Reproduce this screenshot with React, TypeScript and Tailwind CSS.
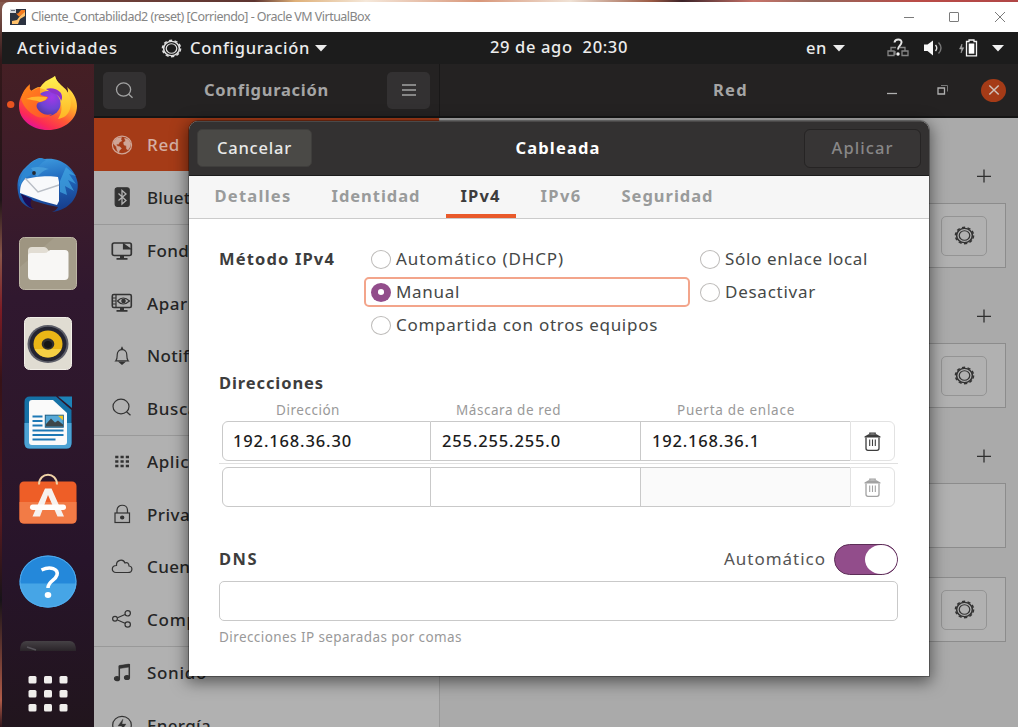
import React, { useLayoutEffect, useRef, useState } from "react";

/* Text tracked at run time so that it fills the width its slot asks for. */
function Fit({ w, className = "", children }: { w: number; className?: string; children: string }) {
  const ref = useRef<HTMLSpanElement>(null);
  const [spacing, setSpacing] = useState(0);
  useLayoutEffect(() => {
    const el = ref.current;
    if (!el) return;
    const prev = el.style.letterSpacing;
    el.style.letterSpacing = "0px";
    const natural = el.getBoundingClientRect().width;
    el.style.letterSpacing = prev;
    setSpacing((w - natural) / children.length);
  }, [w, children]);
  return (
    <span ref={ref} className={"inline-block shrink-0 whitespace-pre " + className} style={{ letterSpacing: spacing + "px" }}>
      {children}
    </span>
  );
}

function Gear({ className = "" }: { className?: string }) {
  return (
    <svg viewBox="0 0 20 20" preserveAspectRatio="none" fill="none" stroke="currentColor" className={"h-[19px] w-[21px] " + className}>
      <circle cx="10" cy="10" r="8.600" strokeWidth="1.500" strokeDasharray="3.100 2.304" />
      <circle cx="10" cy="10" r="7.500" strokeWidth="1.500" />
      <circle cx="10" cy="10" r="5" strokeWidth="1.200" />
    </svg>
  );
}

function SearchIcon() {
  return (
    <svg viewBox="0 0 20 18" fill="none" stroke="currentColor" strokeWidth="1.400" className="h-[17px] w-[19px]">
      <ellipse cx="9" cy="8" rx="7.500" ry="7" />
      <path d="M14.500 13l4 3.600" />
    </svg>
  );
}

function Caret({ className = "" }: { className?: string }) {
  return (
    <svg viewBox="0 0 12 7" fill="currentColor" className={"h-[7px] w-3 " + className}>
      <path d="M0 0h12L6 6.500z" />
    </svg>
  );
}

function Trash({ className }: { className: string }) {
  return (
    <svg viewBox="0 0 17 19" fill="none" stroke="currentColor" strokeWidth="1.200" className={"h-[19px] w-[17px] " + className}>
      <path d="M5.800 2.600V1.100h5.400v1.500" />
      <path d="M4.500 2.200h8l4 2.200v1H.5v-1z" fill="currentColor" stroke="none" />
      <path d="M2 5.500v10.800q0 2 2 2h9q2 0 2-2V5.500" strokeWidth="1.300" />
      <path d="M5.700 7.500v6.500M8.500 7.500v6.500M11.300 7.500v6.500" strokeWidth="1.100" />
    </svg>
  );
}

/* ---------- dock ---------- */

const dockSvg = "block h-[79.5px] w-[92px] shrink-0";

function Firefox() {
  return (
    <svg viewBox="0 0 92 79.5" className={dockSvg}>
      <defs>
        <linearGradient id="ffA" x1=".85" y1=".1" x2=".3" y2="1">
          <stop offset="0" stopColor="#fff04c" />
          <stop offset=".35" stopColor="#ffb02a" />
          <stop offset=".62" stopColor="#ff5a34" />
          <stop offset=".85" stopColor="#fb2a56" />
          <stop offset="1" stopColor="#e3129b" />
        </linearGradient>
        <radialGradient id="ffB" cx=".65" cy=".25" r=".85">
          <stop offset="0" stopColor="#a238e8" />
          <stop offset=".55" stopColor="#6d44d4" />
          <stop offset="1" stopColor="#4a3494" />
        </radialGradient>
        <linearGradient id="ffC" x1="0" y1="0" x2="1" y2="1">
          <stop offset="0" stopColor="#ff8a16" />
          <stop offset="1" stopColor="#ff4e30" />
        </linearGradient>
        <linearGradient id="ffD" x1="0" y1="0" x2="0" y2="1">
          <stop offset="0" stopColor="#fff352" />
          <stop offset="1" stopColor="#ffb424" />
        </linearGradient>
      </defs>
      <ellipse cx="8.700" cy="40.500" rx="3.700" ry="3.500" fill="#e95420" />
      <path d="M28 21c-1 3-1 5 0 7 3-3 7-5 10-5 7-2 12-6 15-11 1 5 5 8 9 12 2 1 3 3 4 5 0-2 0-4-1-6 6 5 10 12 10 19 0 14-13 24-29 24S17 56 17 42c0-8 4-14 11-21z" fill="url(#ffA)" />
      <path d="M38 24c5-9 10-8 15-12 1 5 5 8 9 12 6 6 8 13 6 21-2 6-6 9-12 10 8-12 3-25-18-31z" fill="url(#ffD)" />
      <ellipse cx="46" cy="39.500" rx="12.500" ry="12.500" fill="url(#ffB)" />
      <path d="M50 29c5 1 8 4 9 8 2-3 1-7-1-9-3-3-9-5-14-3z" fill="#8d31cc" />
      <path d="M28 20c-1 4 0 6 2 7l8-4v6c0 2 3 3 8 4 0 2-3 4-7 5-4 0-5 3-4 6 3 5 8 8 15 6-4 4-12 5-18 1-9-5-12-13-13-16 1-6 4-11 9-15z" fill="url(#ffC)" />
      <path d="M24 35c6-3 12-3 21-2 0 3-4 4-7 5-5-2-9-2-14-3z" fill="#ffb52e" />
    </svg>
  );
}

function Thunderbird() {
  return (
    <svg viewBox="0 0 92 79.500" className={dockSvg}>
      <defs>
        <linearGradient id="tbA" x1=".3" y1="0" x2=".5" y2="1">
          <stop offset="0" stopColor="#3f9de0" />
          <stop offset=".45" stopColor="#2068bd" />
          <stop offset="1" stopColor="#173d8c" />
        </linearGradient>
      </defs>
      <path d="M17 53c-3-12-2-22 7-30 3-3 8-8 14-9l5 1c16-2 30 9 32.500 23 2 15-8 28-25.500 30 3-1 5-3 6-5l-10-2-14-4-13-7c3 6 6 11 13 15-8-2-13-6-15-12z" fill="url(#tbA)" />
      <path d="M19 50c3 9 6 12 12 15-3-4-3-7-1-10z" fill="#1b0d55" />
      <path d="M23 35l11-2c7-1 17-1 22 0l1 5v19l-2 4-15-4-22-8c0-6 1-10 5-14z" fill="#f8f9fb" />
      <path d="M23 34l13 14 21-7" fill="none" stroke="#b9bec6" strokeWidth="1.400" />
      <path d="M17 43c1-13 10-26 22-29l5 2c-9 5-10 14-21 18-3 3-4 6-6 9z" fill="#2e87d2" />
      <path d="M29 24c7-2 12-1 18 1-6 1-9 5-12 8z" fill="#5cb3e6" opacity=".5" />
      <path d="M64 23l10 9-7-2 7 10-8-4 6 11-9-5 2 9-7-3V37z" fill="#41a7e2" opacity=".7" />
      <circle cx="32" cy="29" r="1.900" fill="#222a33" />
    </svg>
  );
}

function Files() {
  return (
    <svg viewBox="0 0 92 79.500" className={dockSvg}>
      <rect x="17.500" y="14.500" width="57" height="52" rx="5" fill="#a59d8a" stroke="#bdb6a5" />
      <path d="M18 44L52 15H23q-5 0-5 5z" fill="#91886f" opacity=".35" />
      <path d="M26 28q0-4 4-4h12q2 0 3 1.500l2 2.500h15q4 0 4 4v5H26z" fill="#e2ddd3" />
      <path d="M26 33q0-3 3-3h13q3 0 4-1.500l2-1.500h15q3.500 0 3.500 3.500V53q0 4-4 4H30q-4 0-4-4z" fill="#f8f7f5" />
    </svg>
  );
}

function Rhythmbox() {
  return (
    <svg viewBox="0 0 92 79.500" className={dockSvg}>
      <rect x="22.500" y="14.500" width="47" height="52" rx="5" fill="#e0dcd2" stroke="#f2efe8" />
      <ellipse cx="46" cy="41" rx="20.500" ry="19" fill="#5d5e68" />
      <ellipse cx="46" cy="41" rx="18.500" ry="17.200" fill="#242431" />
      <ellipse cx="46" cy="41" rx="14.500" ry="13.500" fill="#eab616" />
      <path d="M32.500 46a14.500 13.500 0 0027 0z" fill="#f6d650" opacity=".8" />
      <ellipse cx="46" cy="41" rx="6.300" ry="5.800" fill="#2d2d2f" />
      <ellipse cx="46" cy="41.500" rx="4" ry="3.500" fill="#151515" />
    </svg>
  );
}

function Writer() {
  return (
    <svg viewBox="0 0 92 79.500" className={dockSvg}>
      <path d="M28 14.500h26L69.500 28v33q0 5.500-5 5.500h-37q-5 0-5-5.500V20q0-5.500 5.500-5.500z" fill="#1571a6" />
      <path d="M22.500 41h47v20q0 5.500-5 5.500h-37q-5 0-5-5.500z" fill="#4da3d4" />
      <path d="M56 14.500h14V26z" fill="#1d83b8" />
      <path d="M30 18h21l14 13v29q0 3-3 3H30q-3 0-3-3V21q0-3 3-3z" fill="#fafafa" />
      <path d="M30.500 34.500h10M30.500 39h10M30.500 43.500h10M30.500 48.500h31M30.500 53h31M30.500 57.500h23" stroke="#1d78b5" strokeWidth="2.200" />
      <rect x="43.300" y="33.200" width="18" height="12" fill="#56a9d8" stroke="#1b5d85" />
      <path d="M56 33.700h5v4.500z" fill="#f3c21c" />
      <path d="M44 44.500V42l5-5.500 4 4 3-2 5 4v2z" fill="#3d4649" />
    </svg>
  );
}

function Software() {
  return (
    <svg viewBox="0 0 92 79.500" className={dockSvg}>
      <rect x="17.500" y="19.500" width="57" height="42" rx="4.500" fill="#ee5e27" />
      <path d="M17.500 40h57v17q0 4.500-4.500 4.500H22q-4.500 0-4.500-4.500z" fill="#f27b46" />
      <path d="M37 22.500c0-13 18-13 18 0" fill="none" stroke="#f0d2a6" strokeWidth="2" />
      <path d="M43 26.500h6.500L62 54.500h-6.500L46 33l-8 21.500h-7.500z" fill="#f6f1ee" />
      <rect x="28" y="42.500" width="36" height="5.500" rx="2.700" fill="#fffdfb" />
    </svg>
  );
}

function HelpApp() {
  return (
    <svg viewBox="0 0 92 79.500" className={dockSvg}>
      <ellipse cx="46" cy="40.500" rx="28.500" ry="26" fill="#2488da" />
      <path d="M17.500 42.500h57c-1 13-12 24-28.500 24s-27.500-11-28.500-24z" fill="#46a5e6" />
      <ellipse cx="46" cy="40.500" rx="28" ry="25.500" fill="none" stroke="#54acec" />
      <path d="M39.500 29c9-4.500 17-1 15.500 5-1.500 5.500-9 6-9 13" fill="none" stroke="#fff" strokeWidth="3.500" />
      <ellipse cx="46" cy="54" rx="3.300" ry="3" fill="#fff" />
    </svg>
  );
}

/* ---------- settings sidebar ---------- */

const sideIcons: Record<string, React.ReactNode> = {
  Red: (
    <>
      <ellipse cx="11" cy="10" rx="9.600" ry="8.800" />
      <path d="M2.500 6.500L6 3l4.500-.8L10 4.500l1 1.200-2.500 1.500-1 2-2-.3L6 11l3 .8 1.500 1.700-2 2-1 2.500-1.500-3-.8-3.500L2.500 9zM13.500 3l4 1.500L20 8.500l-1 3.500-2 3-1.500-1-.3-3.200L13 10l-.5-2.500 2-1.500z" fill="currentColor" strokeWidth=".4" />
    </>
  ),
  Bluetooth: (
    <>
      <rect x="4.200" y=".8" width="14" height="18.500" rx="2" fill="currentColor" />
      <path d="M7.500 6.500l7.500 7-4 3.500V3.500l4 3.500-7.500 6.500" stroke="#b1b1b1" strokeWidth="1.300" />
    </>
  ),
  Fondo: (
    <>
      <rect x="1.300" y="2" width="19" height="12.500" rx="1.800" strokeWidth="1.700" />
      <path d="M12.500 3v5h7z" fill="currentColor" />
      <path d="M9 15h4v2h3.500v1.800h-11V17H9z" fill="currentColor" strokeWidth="0" />
    </>
  ),
  Apariencia: (
    <>
      <rect x="1.300" y="1.500" width="19" height="13" rx="1.500" strokeWidth="1.600" />
      <path d="M5 2v12M1.500 5h3M1.500 8h3M1.500 11h3" />
      <path d="M6.500 8q5.500-6 12 0-6.500 6-12 0z" />
      <circle cx="12.500" cy="8" r="1.700" fill="currentColor" />
      <path d="M9 15h4v2h3.500v1.800h-11V17H9z" fill="currentColor" strokeWidth="0" />
    </>
  ),
  Notificaciones: (
    <>
      <path d="M4.800 14.800c1.500-1.500 1.400-3 1.400-6 0-7 9.600-7 9.600 0 0 3-.1 4.500 1.400 6zM10.200 3l.8-1.500.8 1.500" />
      <path d="M8.500 16h5l-2.500 2.200z" fill="currentColor" />
    </>
  ),
  Buscar: (
    <>
      <ellipse cx="10" cy="8.500" rx="8" ry="7.300" />
      <path d="M15.500 13.800l4 3.500" />
    </>
  ),
  Aplicaciones: (
    <path d="M4.200 5h3.200M9.500 5h3.200M14.800 5H18M4.200 9.500h3.200M9.500 9.500h3.200M14.800 9.500H18M4.200 14h3.200M9.500 14h3.200M14.800 14H18" strokeWidth="2.600" />
  ),
  Privacidad: (
    <>
      <rect x="4" y="9" width="14.500" height="9.500" />
      <path d="M6 9V6.500c0-7 10.500-7 10.500 0V9" />
      <ellipse cx="11.200" cy="13.500" rx="1.600" ry="1.400" fill="currentColor" />
    </>
  ),
  Cuentas: <path d="M5 15.500h12c5 0 5-6 1-6.500 0-3-2-4-4-3C12 1 5 3 5.500 8.500 0 8.500 0 15.500 5 15.500z" />,
  Compartir: (
    <>
      <circle cx="4" cy="9.800" r="2.400" />
      <circle cx="16.700" cy="4.300" r="2.700" />
      <circle cx="16.700" cy="15.500" r="2.700" />
      <path d="M6.500 8.800L14 5.500M6.500 11l7.500 3.300" />
    </>
  ),
  Sonido: (
    <>
      <path d="M8.300 15.500V3.300l10-1.500V14" strokeWidth="1.500" />
      <path d="M8.300 2.500l10-1.500v3L8.300 5.500z" fill="currentColor" strokeWidth=".5" />
      <ellipse cx="6" cy="15.700" rx="2.500" ry="2" fill="currentColor" />
      <ellipse cx="16" cy="14.500" rx="2.500" ry="2" fill="currentColor" />
    </>
  ),
  Energía: (
    <>
      <ellipse cx="11" cy="10" rx="9.300" ry="8.700" />
      <path d="M12 4l-5 7h4l-1.500 6 5.500-8h-4z" fill="currentColor" strokeWidth=".3" />
    </>
  ),
};

function SideRow({ name, w, active = false }: { name: string; w: number; active?: boolean }) {
  return (
    <div className={active ? "flex h-[53px] shrink-0 items-center bg-[#a53b17] pl-[17px] text-[#d5b0a4]" : "flex h-[52.500px] shrink-0 items-center pl-[17px] text-[#252525]"}>
      <svg viewBox="0 0 22 20" fill="none" stroke="currentColor" strokeWidth="1.200" className={active ? "mr-[14px] h-5 w-[22px] shrink-0 text-[#cfa596]" : "mr-[14px] h-5 w-[22px] shrink-0 text-[#333]"}>
        {sideIcons[name]}
      </svg>
      <Fit w={w} className="text-[17px] font-medium">{name}</Fit>
    </div>
  );
}

const Rule = () => <div className="h-px shrink-0 bg-[#999]" />;

function PlusRow({ first = false }: { first?: boolean }) {
  return (
    <div className={first ? "flex h-[85px] justify-end pr-[14px] pt-[51px]" : "flex h-[75px] justify-end pr-[14px] pt-[41px]"}>
      <svg viewBox="0 0 16 14" className="h-[14px] w-4" stroke="#2f2f2f" strokeWidth="1.300">
        <path d="M1 7.300h14M8 .5v13" />
      </svg>
    </div>
  );
}

function Card({ gear = true }: { gear?: boolean }) {
  return (
    <div className="flex h-[65px] items-center justify-end border border-[#8c8c8c] bg-[#b1b1b1] pr-[18px]">
      {gear && (
        <div className="flex h-10 w-[46px] items-center justify-center rounded-[5px] border border-[#949494] text-[#333]">
          <Gear />
        </div>
      )}
    </div>
  );
}

/* ---------- dialog ---------- */

function Radio({ label, w, on = false }: { label: string; w: number; on?: boolean }) {
  return (
    <div className={on ? "flex h-[30px] w-[326px] items-center rounded-[5px] border-2 border-[#f3a58b] pl-[5px]" : "flex h-[30px] items-center pl-[7px]"}>
      <span className={on ? "mr-[5px] flex h-[19px] w-5 shrink-0 items-center justify-center rounded-[50%] bg-[#924d8b]" : "mr-[5px] h-[19px] w-5 shrink-0 rounded-[50%] border border-[#bdbbb9] bg-white"}>
        {on && <span className="h-[6px] w-[6.500px] rounded-[50%] bg-white" />}
      </span>
      <Fit w={w} className="pb-px text-[17px] leading-6 text-[#454847]">{label}</Fit>
    </div>
  );
}

function Tab({ label, w, active = false }: { label: string; w: number; active?: boolean }) {
  return (
    <div className={active ? "flex items-center border-b-[4px] border-[#e95a2b] px-[15px] pt-[2px] text-[#3d3d3d]" : "flex items-center border-b-[4px] border-transparent px-[15px] pt-[2px] text-[#999b9b]"}>
      <Fit w={w} className="text-[16.500px] font-bold leading-6">{label}</Fit>
    </div>
  );
}

function AddressRow({ values, off = false }: { values: string[]; off?: boolean }) {
  const widths = [119, 119, 108];
  const text = "pb-px text-[16.500px] font-medium leading-6";
  return (
    <div className="ml-[3px] mr-[2px] flex h-10 text-[#1c1c1c]">
      <div className="flex w-[209px] items-center rounded-l-[6px] border border-[#c9c9c9] pl-[10px]">
        {values[0] && <Fit w={widths[0]} className={text}>{values[0]}</Fit>}
      </div>
      <div className="flex w-[209px] items-center border-y border-[#c9c9c9] pl-[11px]">
        {values[1] && <Fit w={widths[1]} className={text}>{values[1]}</Fit>}
      </div>
      <div className={off ? "w-[210px] border-y border-l border-[#c9c9c9] bg-[#fafafa]" : "flex w-[210px] items-center border-y border-l border-[#c9c9c9] pl-[11px]"}>
        {values[2] && <Fit w={widths[2]} className={text}>{values[2]}</Fit>}
      </div>
      <div className="flex w-[45px] items-center justify-center rounded-r-[6px] border border-[#e2e2e2] pr-px">
        <Trash className={off ? "text-[#a2a2a2]" : "text-[#3d3d3d]"} />
      </div>
    </div>
  );
}

function Dialog() {
  return (
    <div className="absolute left-[188.500px] top-[121px] flex h-[554.500px] w-[740.500px] flex-col overflow-hidden rounded-t-[9px] bg-white shadow-[0_4px_16px_2px_rgba(0,0,0,.5),0_0_0_1px_rgba(0,0,0,.3)]">
      <header className="flex h-[55px] shrink-0 items-center justify-between border-b border-t border-b-[#1c1c1c] border-t-[#4b4949] bg-[#333131] pb-px pl-[8.500px] pr-2">
        <div className="flex h-[38px] w-[115px] items-center justify-center rounded-[5px] border border-[#3f3e3c] bg-[#4a4946]">
          <Fit w={75} className="pb-px text-[16.500px] font-medium leading-6 text-[#e9e9e9]">Cancelar</Fit>
        </div>
        <Fit w={85} className="pb-px text-[16.500px] font-bold leading-6 text-white">Cableada</Fit>
        <div className="flex h-[39px] w-[117px] items-center justify-center rounded-[6px] border border-[#262424] bg-[#373535]">
          <Fit w={62} className="pb-px text-[16.500px] font-medium leading-6 text-[#888787]">Aplicar</Fit>
        </div>
      </header>
      <nav className="flex h-[43px] shrink-0 gap-[10px] border-b border-[#cbcbcb] bg-[#f6f6f6] pl-[11px]">
        <Tab label="Detalles" w={77} />
        <Tab label="Identidad" w={89} />
        <Tab label="IPv4" w={40} active />
        <Tab label="IPv6" w={41} />
        <Tab label="Seguridad" w={92} />
      </nav>
      <div className="flex flex-col pl-[30.500px] pr-[31px] pt-[25px]">
        <div className="flex">
          <div className="flex h-[30px] w-[145px] items-center">
            <Fit w={116} className="pb-px text-[16.500px] font-bold leading-6 text-[#3d3d3d]">Método IPv4</Fit>
          </div>
          <div className="flex w-[329px] flex-col gap-[3px]">
            <Radio label="Automático (DHCP)" w={168} />
            <Radio label="Manual" w={64} on />
            <Radio label="Compartida con otros equipos" w={262} />
          </div>
          <div className="flex flex-col gap-[3px]">
            <Radio label="Sólo enlace local" w={143} />
            <Radio label="Desactivar" w={91} />
          </div>
        </div>
        <div className="mt-[30px] flex h-[27px] items-center">
          <Fit w={105} className="pb-px text-[16.500px] font-bold leading-6 text-[#3d3d3d]">Direcciones</Fit>
        </div>
        <div className="flex h-6 items-center pt-[2px] text-[#999]">
          <div className="flex w-[178px] justify-center"><Fit w={64} className="text-[13.500px]">Dirección</Fit></div>
          <div className="flex w-[223px] justify-center"><Fit w={105} className="text-[13.500px]">Máscara de red</Fit></div>
          <div className="flex w-[232px] justify-center"><Fit w={118} className="text-[13.500px]">Puerta de enlace</Fit></div>
        </div>
        <AddressRow values={["192.168.36.30", "255.255.255.0", "192.168.36.1"]} />
        <div className="mb-[3px] mt-[2px] h-px bg-[#e0e0e0]" />
        <AddressRow values={["", "", ""]} off />
        <div className="mt-[36px] flex h-[32px] items-center justify-between">
          <Fit w={39} className="text-[16.500px] font-bold leading-6 text-[#3d3d3d]">DNS</Fit>
          <div className="flex items-center gap-2">
            <Fit w={102} className="text-[17px] leading-6 text-[#555]">Automático</Fit>
            <div className="flex h-[31px] w-16 justify-end rounded-full border border-[#5c2e57] bg-[#924d8b]">
              <div className="h-[29px] w-8 rounded-[50%] bg-white" />
            </div>
          </div>
        </div>
        <div className="mt-[6px] h-10 rounded-[5px] border border-[#c9c9c9]" />
        <div className="mt-[6px] flex h-5 items-center">
          <Fit w={243} className="text-[13.500px] text-[#999]">Direcciones IP separadas por comas</Fit>
        </div>
      </div>
    </div>
  );
}

/* ---------- desktop ---------- */

function StatusIcons() {
  return (
    <div className="flex items-center text-[#f2f2f2]">
      <svg viewBox="0 0 22 20" className="h-5 w-[22px]" fill="none" stroke="#858585" strokeWidth="1.300">
        <path d="M4 13V9.500h5M13 9.500h5V13M1 13h6v4.500H1zM15 13h6v4.500h-6zM8 17V13" />
        <path d="M7.500 4.500C8 .5 15 .5 14.500 4.500c-.3 3-3.500 3.500-3.500 7" stroke="#e5e5e5" strokeWidth="2" />
        <circle cx="11" cy="16" r="1.700" fill="#f5f5f5" stroke="none" />
      </svg>
      <svg viewBox="0 0 20 16" className="ml-[14px] h-4 w-5" fill="none" stroke="#a8a8a8" strokeWidth="1.400">
        <path d="M1 4.500h3.500L10 .5v15l-5.500-4.500H1z" fill="#f7f7f7" stroke="none" />
        <path d="M12.500 5q2.500 3 0 6" stroke="#ddd" />
        <path d="M15.500 2.500q5 5.500 0 11" stroke="#777" />
      </svg>
      <svg viewBox="0 0 20 18" className="ml-[15px] h-[18px] w-5" fill="none">
        <path d="M4 5L1.500 10h2.200L3 14l2.800-5.300H3.700z" fill="#aaa" stroke="#aaa" strokeWidth=".5" />
        <path d="M8.500 2.500H11V1h5v1.500h2.500v14.300h-10z" stroke="#f5f5f5" strokeWidth="1.300" />
        <path d="M10.700 4.500h5.600v10.200h-5.600z" fill="#fff" />
      </svg>
      <Caret className="ml-[14px]" />
    </div>
  );
}

export default function App() {
  return (
    <div className="relative flex h-[727px] w-[1018px] flex-col overflow-hidden bg-[linear-gradient(180deg,#8b5e52_0,#33181a_60px,#201418_200px,#8a5649_255px,#7c1c25_310px,#351217_380px,#571a20_520px,#171318_600px,#b05b48_700px,#30151b_727px)] pl-[2px] font-['Noto_Sans',sans-serif]">
      <div className="-ml-[2px] h-[2px] shrink-0 bg-[linear-gradient(90deg,#7c4a40,#5d3430_25%,#dfb078_29%,#f5e8da_36%,#d89679_47%,#f0e2d5_56%,#9b5a44_64%,#3b2228_67%,#c87369_74%,#94675c_80%,#ba4c47_90%,#b04646)]" />
      <header className="flex h-[30px] shrink-0 items-center rounded-tl-[7px] bg-white pl-[8px] pr-3">
        <svg viewBox="0 0 16 16" className="mr-[5px] h-4 w-4">
          <rect width="16" height="16" fill="#2c3240" />
          <path d="M0 0h6v4H0z" fill="#d7d8dc" />
          <path d="M1 1.500h4" stroke="#68707d" />
          <path d="M1 4.500h5l3 3L15 4V1h-4L8 4.500z" fill="#f47b20" />
          <path d="M10 7l5-4v4l-5 3-2 5H2v-3l5-1z" fill="#ffc16b" />
        </svg>
        <Fit w={339} className="text-[12.500px] text-[#858585]">Cliente_Contabilidad2 (reset) [Corriendo] - Oracle VM VirtualBox</Fit>
        <svg viewBox="0 0 102 12" className="mb-px ml-auto h-3 w-[102px]" fill="none" stroke="#7b7b7b">
          <path d="M0 6.500h10M91 1l10 10M101 1L91 11" />
          <rect x="45.500" y="1.500" width="9" height="9" rx=".5" />
        </svg>
      </header>
      <div className="flex h-8 shrink-0 items-center bg-[#1c1c1c] pl-[15px] pr-[14px] text-[16.500px] font-medium leading-6 text-[#ececec]">
        <Fit w={101} className="pb-px">Actividades</Fit>
        <Gear className="ml-[43px] text-[#dedede]" />
        <Fit w={120} className="ml-2 pb-px">Configuración</Fit>
        <Caret className="ml-[5px]" />
        <Fit w={138} className="ml-[163px] pb-[2px]">29 de ago  20:30</Fit>
        <Fit w={21} className="ml-[178px] pb-px">en</Fit>
        <Caret className="ml-[6px]" />
        <div className="ml-auto"><StatusIcons /></div>
      </div>
      <div className="flex h-[663px] shrink-0">
        <aside className="flex w-[92px] shrink-0 flex-col bg-[linear-gradient(178deg,#451f24_0%,#3d1c2a_17%,#30182f_35%,#2d172b_55%,#27142a_75%,#21151d_100%)]">
          <Firefox />
          <Thunderbird />
          <Files />
          <Rhythmbox />
          <Writer />
          <Software />
          <HelpApp />
          <svg viewBox="0 0 92 105" className="block h-[105px] w-[92px] shrink-0">
            <defs>
              <linearGradient id="term" x1="0" y1="0" x2="0" y2="1">
                <stop offset="0" stopColor="#454145" />
                <stop offset="1" stopColor="#2a2429" />
              </linearGradient>
            </defs>
            <path d="M18 30q0-10 6-10h44q6 0 6 10z" fill="url(#term)" />
            <path d="M25 26l9 3" stroke="#57545a" strokeWidth="1.500" />
            {[58.500, 72.500, 86.500].map((y) =>
              [30.500, 46, 61.500].map((x) => <rect key={x + "-" + y} x={x - 4} y={y - 3.500} width="8" height="7.500" rx="1.500" fill="#f0eeec" />)
            )}
          </svg>
        </aside>
        <main className="flex flex-1 flex-col bg-[#aaa]">
          <div className="flex h-[54px] shrink-0 border-b-2 border-[#151515] bg-[#242222]">
            <div className="flex w-[346px] items-center border-r border-[#191818] pl-[9px] pr-[9px]">
              <div className="flex h-[37px] w-[43px] items-center justify-center rounded-[5px] bg-[#333132] text-[#a3a3a3]"><SearchIcon /></div>
              <Fit w={125} className="ml-[58px] text-[16.500px] font-bold leading-6 text-[#a5a5a5]">Configuración</Fit>
              <div className="ml-auto flex h-[37px] w-[43px] items-center justify-center rounded-[5px] bg-[#333132]">
                <svg viewBox="0 0 14 12" className="h-3 w-[14px]" stroke="#a3a3a3" strokeWidth="1.300"><path d="M0 1h14M0 6h14M0 11h14" /></svg>
              </div>
            </div>
            <div className="flex flex-1 items-center pl-[273px] pr-3">
              <Fit w={35} className="text-[16.500px] font-bold leading-6 text-[#a5a5a5]">Red</Fit>
              <svg viewBox="0 0 64 12" className="ml-auto mr-[31px] h-3 w-16" fill="none" stroke="#b0b0b0" strokeWidth="1.300">
                <path d="M1 9.500h10" />
                <path d="M52 4h6.500v6H52z" />
                <path d="M55 1.500h6.500v6" strokeWidth="1" stroke="#777" />
              </svg>
              <div className="flex h-[23px] w-[25px] items-center justify-center rounded-[50%] bg-[#a53b17]">
                <svg viewBox="0 0 12 12" className="h-3 w-3" stroke="#d0c2bb" strokeWidth="1.500"><path d="M1.300 1.500l9.400 9M10.700 1.500l-9.400 9" /></svg>
              </div>
            </div>
          </div>
          <div className="flex min-h-0 flex-1">
            <div className="flex w-[345px] shrink-0 flex-col overflow-hidden bg-[#b1b1b1]">
              <SideRow name="Red" w={33} active />
              <SideRow name="Bluetooth" w={82} />
              <Rule />
              <SideRow name="Fondo" w={53} />
              <SideRow name="Apariencia" w={92} />
              <SideRow name="Notificaciones" w={120} />
              <SideRow name="Buscar" w={59} />
              <Rule />
              <SideRow name="Aplicaciones" w={108} />
              <SideRow name="Privacidad" w={89} />
              <SideRow name="Cuentas" w={69} />
              <SideRow name="Compartir" w={90} />
              <Rule />
              <SideRow name="Sonido" w={60} />
              <SideRow name="Energía" w={64} />
            </div>
            <div className="flex-1 border-l border-[#999] pr-3">
              <PlusRow first />
              <Card />
              <PlusRow />
              <Card />
              <PlusRow />
              <Card gear={false} />
              <div className="h-[29px]" />
              <Card />
            </div>
          </div>
        </main>
      </div>
      <Dialog />
    </div>
  );
}
